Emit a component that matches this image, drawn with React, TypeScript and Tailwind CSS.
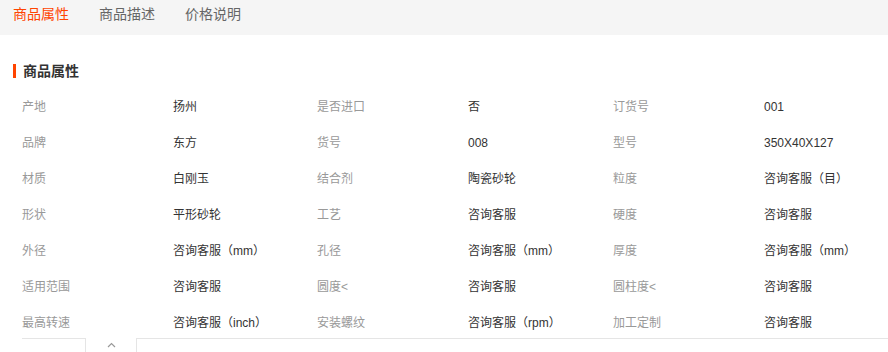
import React from 'react';

const font = { fontFamily: '"Liberation Sans", "Noto Sans CJK SC", sans-serif' };

const rows: [string, string, string, string, string, string][] = [
    ['产地', '扬州', '是否进口', '否', '订货号', '001'],
    ['品牌', '东方', '货号', '008', '型号', '350X40X127'],
    ['材质', '白刚玉', '结合剂', '陶瓷砂轮', '粒度', '咨询客服（目）'],
    ['形状', '平形砂轮', '工艺', '咨询客服', '硬度', '咨询客服'],
    ['外径', '咨询客服（mm）', '孔径', '咨询客服（mm）', '厚度', '咨询客服（mm）'],
    ['适用范围', '咨询客服', '圆度<', '咨询客服', '圆柱度<', '咨询客服'],
    ['最高转速', '咨询客服（inch）', '安装螺纹', '咨询客服（rpm）', '加工定制', '咨询客服'],
];

const App: React.FC = () => {
    return (
        <div className="w-[888px] h-[352px] overflow-hidden bg-white" style={font}>
            <div className="h-[35px] bg-[#f5f5f5] flex items-start pl-[13px] gap-[30px] pt-[4px] text-[14px] leading-[20px]">
                <span className="text-[#ff4400]">商品属性</span>
                <span className="text-[#666]">商品描述</span>
                <span className="text-[#666]">价格说明</span>
            </div>

            <div className="mt-[29px] h-[14px] pl-[13px] flex items-center">
                <div className="w-[3px] h-[14px] bg-[#ff4400]" />
                <h3 className="ml-[7px] text-[14px] leading-[14px] font-bold text-[#333]">商品属性</h3>
            </div>

            <div className="mt-[11px] pl-[22px] grid grid-cols-[151px_144px_151px_145px_151px_1fr] text-[12px]">
                {rows.map((r, i) => (
                    <React.Fragment key={i}>
                        {r.map((c, j) => (
                            <div
                                key={j}
                                className={`h-[36px] flex items-center whitespace-nowrap ${j % 2 === 0 ? 'text-[#999]' : 'text-[#333]'}`}
                            >
                                {c}
                            </div>
                        ))}
                    </React.Fragment>
                ))}
            </div>

            <div className="-mt-[3px] pl-[22px] flex h-[20px]">
                <div className="w-[64px] border-t border-r border-[#e5e5e5]" />
                <div className="w-[50px] flex justify-center pt-[4px]">
                    <svg width="9" height="6" viewBox="0 0 9 6">
                        <polyline points="1,5 4.5,1.5 8,5" fill="none" stroke="#999" strokeWidth="1.2" />
                    </svg>
                </div>
                <div className="flex-1 border-t border-l border-[#e5e5e5]" />
            </div>
        </div>
    );
};

export default App;
